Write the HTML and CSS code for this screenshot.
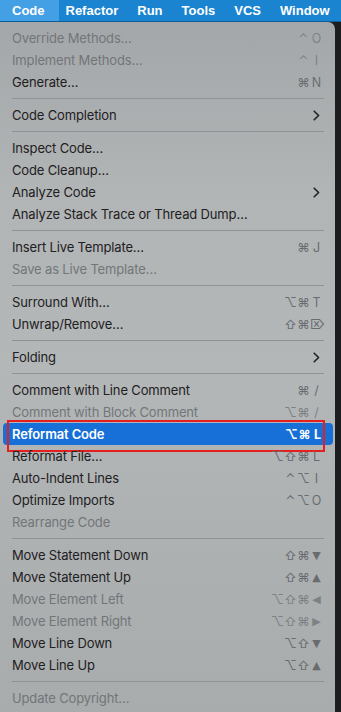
FILE: index.html
```html
<!DOCTYPE html>
<html>
<head>
<meta charset="utf-8">
<link rel="stylesheet" href="styles.css">
</head>
<body>
<div class="menubar">
  <span class="mb-item active">Code</span>
  <span class="mb-item">Refactor</span>
  <span class="mb-item">Run</span>
  <span class="mb-item">Tools</span>
  <span class="mb-item">VCS</span>
  <span class="mb-item">Window</span>
</div>
<div class="stage">
  <div class="panel">
    <div class="row dis"><span>Override Methods…</span><span class="keys"><i>⌃</i><i>O</i></span></div>
    <div class="row dis"><span>Implement Methods…</span><span class="keys"><i>⌃</i><i>I</i></span></div>
    <div class="row"><span>Generate…</span><span class="keys"><i>⌘</i><i>N</i></span></div>
    <div class="sep"></div>
    <div class="row"><span>Code Completion</span><svg class="chev" width="7" height="11" viewBox="0 0 7 11"><path d="M1.2 1.2 L5.6 5.5 L1.2 9.8" fill="none" stroke="#222" stroke-width="1.6" stroke-linecap="round" stroke-linejoin="round"/></svg></div>
    <div class="sep"></div>
    <div class="row"><span>Inspect Code…</span></div>
    <div class="row"><span>Code Cleanup…</span></div>
    <div class="row"><span>Analyze Code</span><svg class="chev" width="7" height="11" viewBox="0 0 7 11"><path d="M1.2 1.2 L5.6 5.5 L1.2 9.8" fill="none" stroke="#222" stroke-width="1.6" stroke-linecap="round" stroke-linejoin="round"/></svg></div>
    <div class="row"><span>Analyze Stack Trace or Thread Dump…</span></div>
    <div class="sep"></div>
    <div class="row"><span>Insert Live Template…</span><span class="keys"><i>⌘</i><i>J</i></span></div>
    <div class="row dis"><span>Save as Live Template…</span></div>
    <div class="sep"></div>
    <div class="row"><span>Surround With…</span><span class="keys"><i>⌥</i><i>⌘</i><i>T</i></span></div>
    <div class="row"><span>Unwrap/Remove…</span><span class="keys"><i>⇧</i><i>⌘</i><i>⌦</i></span></div>
    <div class="sep"></div>
    <div class="row"><span>Folding</span><svg class="chev" width="7" height="11" viewBox="0 0 7 11"><path d="M1.2 1.2 L5.6 5.5 L1.2 9.8" fill="none" stroke="#222" stroke-width="1.6" stroke-linecap="round" stroke-linejoin="round"/></svg></div>
    <div class="sep"></div>
    <div class="row"><span>Comment with Line Comment</span><span class="keys"><i>⌘</i><i>/</i></span></div>
    <div class="row dis"><span>Comment with Block Comment</span><span class="keys"><i>⌥</i><i>⌘</i><i>/</i></span></div>
    <div class="row hl"><span>Reformat Code</span><span class="keys"><i>⌥</i><i>⌘</i><i>L</i></span><div class="redbox"></div></div>
    <div class="row"><span>Reformat File…</span><span class="keys"><i>⌥</i><i>⇧</i><i>⌘</i><i>L</i></span></div>
    <div class="row"><span>Auto-Indent Lines</span><span class="keys"><i>⌃</i><i>⌥</i><i>I</i></span></div>
    <div class="row"><span>Optimize Imports</span><span class="keys"><i>⌃</i><i>⌥</i><i>O</i></span></div>
    <div class="row dis"><span>Rearrange Code</span></div>
    <div class="sep"></div>
    <div class="row"><span>Move Statement Down</span><span class="keys"><i>⇧</i><i>⌘</i><i class="tri">▼</i></span></div>
    <div class="row"><span>Move Statement Up</span><span class="keys"><i>⇧</i><i>⌘</i><i class="tri">▲</i></span></div>
    <div class="row dis"><span>Move Element Left</span><span class="keys"><i>⌥</i><i>⇧</i><i>⌘</i><i class="tri">◀</i></span></div>
    <div class="row dis"><span>Move Element Right</span><span class="keys"><i>⌥</i><i>⇧</i><i>⌘</i><i class="tri">▶</i></span></div>
    <div class="row"><span>Move Line Down</span><span class="keys"><i>⌥</i><i>⇧</i><i class="tri">▼</i></span></div>
    <div class="row"><span>Move Line Up</span><span class="keys"><i>⌥</i><i>⇧</i><i class="tri">▲</i></span></div>
    <div class="sep"></div>
    <div class="row dis"><span>Update Copyright…</span></div>
  </div>
  <div class="edge"></div>
</div>
</body>
</html>
```

FILE: styles.css
```css
html, body {
  margin: 0;
  padding: 0;
  width: 341px;
  height: 712px;
  overflow: hidden;
  background: #1d1f21;
  font-family: Inter, "Noto Sans", sans-serif;
}
.menubar {
  height: 21px;
  background: #1a84d1;
  border-bottom: 1px solid #0f5d96;
  display: flex;
  align-items: stretch;
  gap: 19px;
  overflow: hidden;
}
.mb-item {
  color: #fff;
  font-family: "Liberation Sans", Arial, sans-serif;
  font-weight: 700;
  font-size: 13px;
  line-height: 21px;
  white-space: nowrap;
}
.mb-item.active {
  background: #44a0e4;
  padding-left: 12px;
  padding-right: 14px;
  margin-right: -12px;
}
.stage {
  display: flex;
  height: 690px;
}
.panel {
  width: 335px;
  flex: none;
  background: linear-gradient(180deg, #a4a7a9 0%, #b1b5b6 25%, #b3b7b8 50%, #adb1b2 75%, #a8acad 100%);
  border-top-right-radius: 7px;
  padding-top: 5px;
  box-sizing: border-box;
}
.edge {
  flex: 1;
  background: #1c1d1f;
}
.row {
  position: relative;
  height: 22px;
  display: flex;
  align-items: center;
  justify-content: space-between;
  padding: 0 12px;
  font-size: 13px;
  color: #1f2021;
  letter-spacing: -0.15px;
}
.row.dis {
  color: #727679;
}
.keys {
  display: flex;
  align-items: center;
  color: #686c6f;
  font-family: Inter, "DejaVu Sans", sans-serif;
  font-size: 12.5px;
  letter-spacing: 0;
}
.row.dis .keys {
  color: #7d8184;
}
.keys i {
  font-style: normal;
  width: 13px;
  text-align: center;
}
.keys i.tri {
  font-family: "DejaVu Sans", sans-serif;
  font-size: 11px;
}
.chev {
  margin-right: 3px;
}
.sep {
  height: 1px;
  background: #8f9395;
  margin: 5px 11px 5px 12px;
}
.row.hl {
  background: #1670d7;
  color: #fff;
  font-weight: 600;
  margin: 0 2px 0 3px;
  padding: 0 9px;
  border-radius: 4px;
}
.row.hl .keys {
  color: #fff;
  font-weight: 700;
}
.redbox {
  position: absolute;
  left: 4px;
  right: 8px;
  top: -3px;
  bottom: -7px;
  border: 2px solid #e3201f;
  pointer-events: none;
}
```
